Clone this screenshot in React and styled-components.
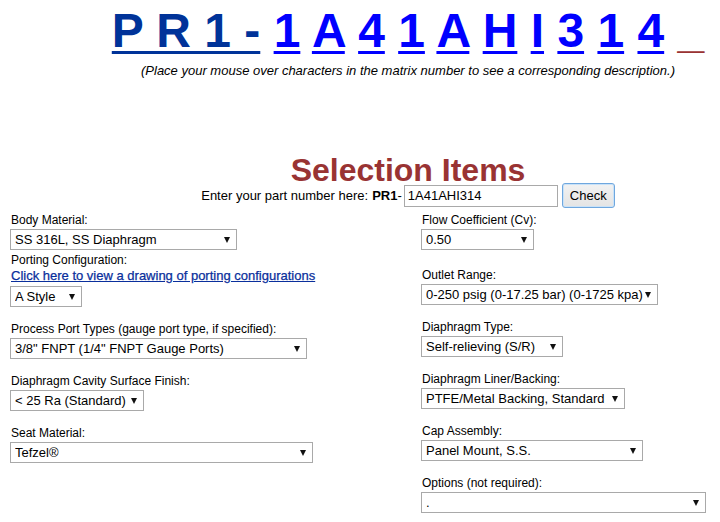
import React from "react";
import styled, { createGlobalStyle } from "styled-components";

const Global = createGlobalStyle`
  html, body { margin: 0; padding: 0; background: #fff; }
  body { font-family: "Liberation Sans", Arial, sans-serif; color: #000; }
`;

const Page = styled.div`
  width: 720px;
`;

const Matrix = styled.div`
  padding: 3px 0 0 96px;
  text-align: center;
  font-size: 48px;
  font-weight: bold;
  line-height: 55px;
  white-space: pre;
`;

const Code = styled.a`
  color: ${(p) => p.$tone};
  text-decoration: ${(p) => (p.$plain ? "none" : "underline")};
  text-decoration-thickness: 3px;
  text-underline-offset: 4px;
  cursor: pointer;
`;

const Hint = styled.div`
  padding-left: 96px;
  text-align: center;
  font-size: 13px;
  font-style: italic;
  line-height: 15px;
  margin-top: 5px;
`;

const Title = styled.h2`
  margin: 74px 0 0;
  padding-left: 96px;
  text-align: center;
  font-size: 32px;
  line-height: 37px;
  font-weight: bold;
  color: #993333;
`;

const EntryRow = styled.div`
  padding-left: 96px;
  display: flex;
  justify-content: center;
  align-items: center;
  font-size: 13px;
  margin-top: -6px;
`;

const Prefix = styled.b`
  margin-left: 4px;
`;

const PartInput = styled.input`
  box-sizing: border-box;
  width: 154px;
  height: 22px;
  margin-left: 2px;
  border: 1px solid #a9a9a9;
  padding: 0 3px;
  font: 13px "Liberation Sans", Arial, sans-serif;
  color: #000;
  outline: none;
`;

const CheckButton = styled.button`
  box-sizing: border-box;
  width: 53px;
  height: 25px;
  margin-left: 4px;
  border: 1px solid #6fa7de;
  border-radius: 3px;
  background: linear-gradient(#f2f2f2, #e4e4e4);
  box-shadow: inset 0 0 0 1px #c9e2f8;
  font: 13px "Liberation Sans", Arial, sans-serif;
  color: #000;
  padding: 0;
`;

const Form = styled.div`
  display: grid;
  grid-template-columns: 411px 1fr;
  padding-left: 10px;
  margin-top: 5px;
`;

const Column = styled.div`
  display: flex;
  flex-direction: column;
`;

const Field = styled.div`
  display: flex;
  flex-direction: column;
  align-items: flex-start;
  margin-top: ${(p) => p.$top || 0}px;
`;

const Label = styled.div`
  font-size: 12px;
  line-height: 15px;
  padding-left: 1px;
`;

const DrawingLink = styled.a`
  font-size: 13px;
  line-height: 15px;
  color: #0a2f9c;
  text-decoration: underline;
  padding-left: 1px;
  margin-bottom: 2px;
  -webkit-text-stroke: 0.25px #0a2f9c;
`;

const SelectBox = styled.span`
  position: relative;
  display: inline-block;
  margin-top: 1px;
`;

const Select = styled.select`
  box-sizing: border-box;
  appearance: none;
  -webkit-appearance: none;
  width: ${(p) => p.$w}px;
  height: 21px;
  border: 1px solid #a9a9a9;
  border-radius: 0;
  background: #fff;
  padding: 0 12px 0 4px;
  font: 13px "Liberation Sans", Arial, sans-serif;
  color: #000;
  outline: none;
`;

const Arrow = styled.span`
  position: absolute;
  right: 7px;
  top: 8px;
  width: 0;
  height: 0;
  border-left: 3.5px solid transparent;
  border-right: 3.5px solid transparent;
  border-top: 6px solid #111;
  pointer-events: none;
`;

function Dropdown({ w, value }) {
  return (
    <SelectBox>
      <Select $w={w} defaultValue={value}>
        <option value={value}>{value}</option>
      </Select>
      <Arrow />
    </SelectBox>
  );
}

const codes = ["1", "A", "4", "1", "A", "H", "I", "3", "1", "4"];

export default function App() {
  return (
    <Page>
      <Global />
      <Matrix>
        <Code $tone="#003399">P R 1 -</Code>
        {codes.map((c, i) => (
          <React.Fragment key={i}>
            {" "}
            <Code $tone="#0000ff">{c}</Code>
          </React.Fragment>
        ))}
        {" "}
        <Code $tone="#993333" $plain>_</Code>
      </Matrix>
      <Hint>
        (Place your mouse over characters in the matrix number to see a corresponding description.)
      </Hint>
      <Title>Selection Items</Title>
      <EntryRow>
        Enter your part number here: <Prefix>PR1</Prefix>-
        <PartInput defaultValue="1A41AHI314" />
        <CheckButton>Check</CheckButton>
      </EntryRow>
      <Form>
        <Column>
          <Field $top={0}>
            <Label>Body Material:</Label>
            <Dropdown w={227} value="SS 316L, SS Diaphragm" />
          </Field>
          <Field $top={3}>
            <Label>Porting Configuration:</Label>
            <DrawingLink href="#">Click here to view a drawing of porting configurations</DrawingLink>
            <Dropdown w={72} value="A Style" />
          </Field>
          <Field $top={15}>
            <Label>Process Port Types (gauge port type, if specified):</Label>
            <Dropdown w={297} value={'3/8" FNPT (1/4" FNPT Gauge Ports)'} />
          </Field>
          <Field $top={15}>
            <Label>Diaphragm Cavity Surface Finish:</Label>
            <Dropdown w={134} value="< 25 Ra (Standard)" />
          </Field>
          <Field $top={15}>
            <Label>Seat Material:</Label>
            <Dropdown w={303} value="Tefzel®" />
          </Field>
        </Column>
        <Column>
          <Field $top={0}>
            <Label>Flow Coefficient (Cv):</Label>
            <Dropdown w={113} value="0.50" />
          </Field>
          <Field $top={18}>
            <Label>Outlet Range:</Label>
            <Dropdown w={237} value="0-250 psig (0-17.25 bar) (0-1725 kpa)" />
          </Field>
          <Field $top={15}>
            <Label>Diaphragm Type:</Label>
            <Dropdown w={142} value="Self-relieving (S/R)" />
          </Field>
          <Field $top={15}>
            <Label>Diaphragm Liner/Backing:</Label>
            <Dropdown w={204} value="PTFE/Metal Backing, Standard" />
          </Field>
          <Field $top={15}>
            <Label>Cap Assembly:</Label>
            <Dropdown w={222} value="Panel Mount, S.S." />
          </Field>
          <Field $top={15}>
            <Label>Options (not required):</Label>
            <Dropdown w={285} value="." />
          </Field>
        </Column>
      </Form>
    </Page>
  );
}
